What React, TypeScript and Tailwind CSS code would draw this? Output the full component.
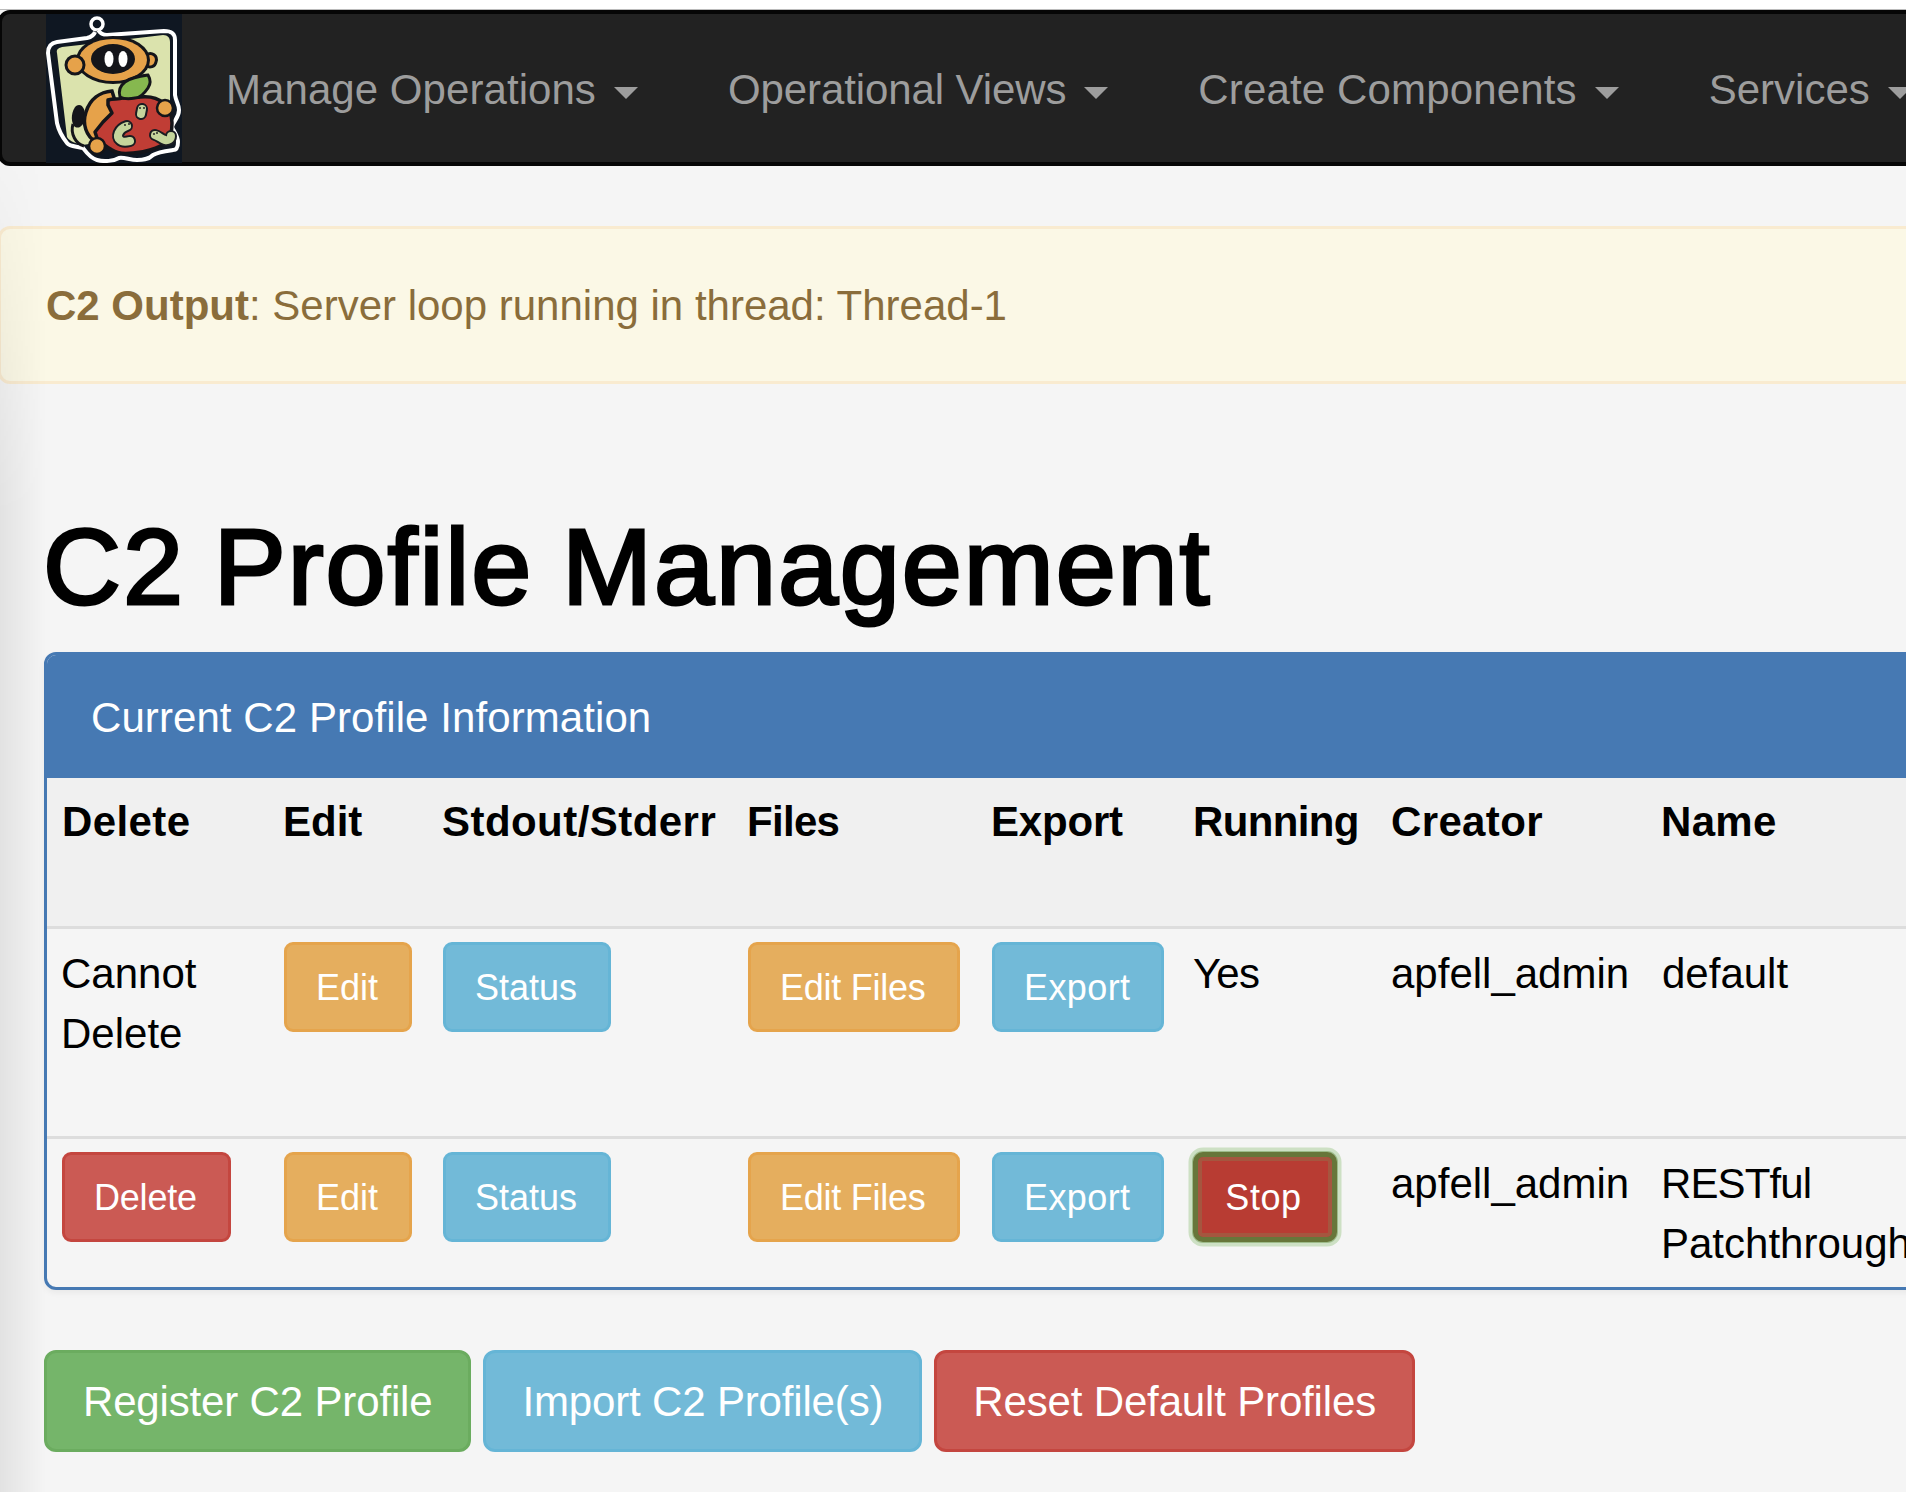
import React from "react";

const sans = "font-['Liberation_Sans',Arial,sans-serif]";

function Worm({ d }: { d: string }) {
  return (
    <g fill="none" strokeLinecap="round" strokeLinejoin="round">
      <path d={d} stroke="#1a1c22" strokeWidth="12" />
      <path d={d} stroke="#c5d59c" strokeWidth="8" />
    </g>
  );
}

function Logo() {
  return (
    <svg viewBox="0 0 136 149" preserveAspectRatio="none" className="w-[136px] h-[149px] shrink-0 -mr-[1px] bg-[#0f1722]">
      <circle cx="51" cy="10" r="6" fill="none" stroke="#fff" strokeWidth="3.5" />
      <path
        d="M52 16 C54 19 57 21 61 21 L118 17 C125 17 129 19 129 26 L129 81 C130 88 133 90 133 96 C133 104 128 106 126 113 C128 118 132 122 132 128 C132 134 130 136 127 136 C120 137 112 138 107 141 C102 146 96 146 91 146 C84 146 78 143 73 144 C68 147 58 148 51 146 C44 144 40 138 37 134 C30 132 24 133 21 129 C17 124 13 118 11 109 L2 39 C2 32 5 29 11 28 L41 24 C45 23 48 21 49 18"
        fill="#0f1722"
        stroke="#fff"
        strokeWidth="4"
        strokeLinejoin="round"
      />
      <path d="M11 39 C10 35 13 34 16 33 L34 31 L92 24 L117 21 C122 21 124 24 124 28 L124 89 L100 120 L37 131 C30 129 24 128 21 123 Z" fill="#dbe3ad" />
      <path d="M100 41 C106 37 112 42 110 48 C109 53 104 54 100 52 Z" fill="#e6a24a" stroke="#14151a" strokeWidth="3" />
      <ellipse cx="67" cy="46" rx="37" ry="24" fill="#14151a" />
      <ellipse cx="67" cy="46" rx="34" ry="21" fill="#e6a24a" />
      <ellipse cx="67" cy="45" rx="22" ry="15" fill="#14151a" />
      <ellipse cx="63" cy="45" rx="4.5" ry="8" fill="#fff" />
      <ellipse cx="77" cy="45" rx="4.5" ry="8" fill="#fff" />
      <circle cx="29" cy="51" r="9" fill="#e6a24a" stroke="#14151a" strokeWidth="3" />
      <path d="M30 92 C36 88 40 96 39 104 C38 112 32 116 28 112 C24 106 26 96 30 92 Z" fill="#14151a" />
      <path d="M27 110 C24 120 30 130 38 132" fill="none" stroke="#14151a" strokeWidth="3" />
      <path d="M66 77 C54 78 44 85 40 98 C36 110 40 122 50 128 L62 120 L70 90 Z" fill="#e6a24a" stroke="#14151a" strokeWidth="3.5" />
      <path d="M62 90 L66 99 L57 108 L50 118 L54 122 L62 110 L70 102 L66 90 Z" fill="#e8cfa8" />
      <path d="M62 86 C68 84 72 86 77 84 C84 82 90 84 94 83 C104 82 112 84 117 89 C123 94 126 102 126 109 C126 118 124 124 121 128 C116 132 110 134 104 136 C98 138 92 139 87 139 C78 140 70 139 66 136 C60 132 54 129 51 124 L49 118 L57 108 L66 99 L62 91 Z" fill="#c03d35" stroke="#14151a" strokeWidth="3.5" strokeLinejoin="round" />
      <path d="M74 83 C72 76 75 71 79 68 C86 63 94 62 102 61 C105 66 104 71 102 74 C98 80 94 84 89 84 C84 85 78 85 74 83 Z" fill="#86b84f" stroke="#14151a" strokeWidth="3" />
      <Worm d="M96 95 L95 100" />
      <Worm d="M81 112 C72 115 70 123 74 126 C76 128 80 128 84 127" />
      <Worm d="M109 121 C113 122 115 125 119 126 C122 127 125 125 125 122" />
      <circle cx="94" cy="94" r="0.9" fill="#14151a" />
      <circle cx="98" cy="94" r="0.9" fill="#14151a" />
      <circle cx="79" cy="111" r="0.9" fill="#14151a" />
      <circle cx="83" cy="110" r="0.9" fill="#14151a" />
      <circle cx="108" cy="120" r="0.9" fill="#14151a" />
      <circle cx="111" cy="119" r="0.9" fill="#14151a" />
      <circle cx="119" cy="94" r="8" fill="#e6a24a" stroke="#14151a" strokeWidth="2.5" />
      <circle cx="51" cy="132" r="8" fill="#e6a24a" stroke="#14151a" strokeWidth="2.5" />
    </svg>
  );
}

function NavItem({ label, track = "" }: { label: string; track?: string }) {
  return (
    <div className="flex items-center px-[45px] pt-[4px] h-full text-[42px] leading-[60px] text-[#9d9d9d] whitespace-nowrap shrink-0">
      <span className={track}>{label}</span>
      <span className="ml-[18px] mt-[6px] w-0 h-0 border-x-[12px] border-x-transparent border-t-[12px] border-t-[#9d9d9d]" />
    </div>
  );
}

const tones = {
  red: "bg-[#cb5a54] border-[#c4463f]",
  orange: "bg-[#e5ae5e] border-[#e5a44c]",
  blue: "bg-[#72bad8] border-[#65b5d6]",
  green: "bg-[#75b56a] border-[#6bac5f]",
};

function Btn({ tone, children, extra = "" }: { tone: keyof typeof tones; children: React.ReactNode; extra?: string }) {
  return (
    <span className={`block w-fit border-[3px] rounded-[9px] pl-[29px] pr-[31px] pt-[16px] pb-[14px] text-[36px] leading-[54px] text-white whitespace-nowrap ${tones[tone]} ${extra}`}>
      {children}
    </span>
  );
}

function BigBtn({ tone, children }: { tone: keyof typeof tones; children: React.ReactNode }) {
  return (
    <span className={`inline-block border-[3px] rounded-[12px] px-[36px] pt-[19px] pb-[17px] text-[42px] leading-[60px] tracking-[-0.16px] text-white whitespace-nowrap ${tones[tone]}`}>
      {children}
    </span>
  );
}

const td = "px-[15px] pt-[15px] pb-[8px] align-top border-t-[3px] border-[#dddddd]";
const tdBtn = "px-[15px] pt-[13px] pb-[8px] align-top border-t-[3px] border-[#dddddd]";
const th = "px-[15px] pt-[14px] align-top text-left font-bold";

const heads = [
  { label: "Delete", cls: "tracking-[0.4px]" },
  { label: "Edit", cls: "" },
  { label: "Stdout/Stderr", cls: "tracking-[0.45px]" },
  { label: "Files", cls: "tracking-[-0.7px] !pl-[14px]" },
  { label: "Export", cls: "tracking-[-0.2px] !pl-[14px]" },
  { label: "Running", cls: "tracking-[-0.65px] !pl-[14px]" },
  { label: "Creator", cls: "tracking-[0.35px]" },
  { label: "Name", cls: "tracking-[0.3px] !pl-[14px]" },
];

function Buttons() {
  return (
    <>
      <td className={tdBtn}><Btn tone="orange" extra="ml-[1px]">Edit</Btn></td>
      <td className={tdBtn}><Btn tone="blue" extra="ml-[1px]">Status</Btn></td>
      <td className={tdBtn}><Btn tone="orange" extra="tracking-[-0.25px]">Edit Files</Btn></td>
      <td className={tdBtn}><Btn tone="blue" extra="tracking-[0.4px]">Export</Btn></td>
    </>
  );
}

export default function App() {
  return (
    <div className={`relative w-[1906px] h-[1492px] overflow-hidden bg-[#f5f5f5] text-black text-[42px] leading-[60px] ${sans}`}>
      <div className="h-[10px] bg-white border-b border-[#bbbbbb]" />
      <nav className="-ml-[2px] w-[2400px] h-[156px] flex items-stretch bg-[#222222] border-[4px] border-[#060606] rounded-[12px] pl-[44px]">
        <Logo />
        <NavItem label="Manage Operations" track="tracking-[0.06px]" />
        <NavItem label="Operational Views" track="tracking-[-0.1px]" />
        <NavItem label="Create Components" track="tracking-[0.15px]" />
        <NavItem label="Services" />
      </nav>
      <div className="-ml-[2px] w-[2400px] mt-[60px] h-[158px] border-[3px] border-[#f9ebd0] rounded-[12px] bg-[#fbf8e6] text-[#8a6d3b] px-[45px] pt-[47px]">
        <b>C2 Output</b>: Server loop running in thread: Thread-1
      </div>
      <h1 className="ml-[43px] mt-[123px] text-[108px] leading-[119px] font-normal tracking-[1.9px] [word-spacing:-3px] [-webkit-text-stroke:3px_black] whitespace-nowrap">C2 Profile Management</h1>
      <section className="ml-[44px] mt-[26px] w-[2400px] border-[3px] border-[#4679b3] rounded-[12px] shadow-[0_3px_6px_rgba(0,0,0,0.05)]">
        <div className="h-[123px] bg-[#4679b3] text-white pl-[44px] pt-[33px] tracking-[0.08px] rounded-t-[9px]">Current C2 Profile Information</div>
        <table className="table-fixed border-collapse w-[2000px] text-black">
          <colgroup>
            <col className="w-[221px]" />
            <col className="w-[159px]" />
            <col className="w-[306px]" />
            <col className="w-[244px]" />
            <col className="w-[202px]" />
            <col className="w-[197px]" />
            <col className="w-[271px]" />
            <col className="w-[400px]" />
          </colgroup>
          <thead className="bg-[#f0f0f0]">
            <tr className="h-[149px]">
              {heads.map((h) => (
                <th key={h.label} className={`${th} ${h.cls}`}>{h.label}</th>
              ))}
            </tr>
          </thead>
          <tbody>
            <tr className="h-[210px]">
              <td className={`${td} !pl-[14px]`}>Cannot Delete</td>
              <Buttons />
              <td className={`${td} !pl-[14px] tracking-[-0.8px]`}>Yes</td>
              <td className={td}>apfell_admin</td>
              <td className={td}>default</td>
            </tr>
            <tr className="h-[150px]">
              <td className={tdBtn}><Btn tone="red" extra="tracking-[-0.2px]">Delete</Btn></td>
              <Buttons />
              <td className={tdBtn}>
                <span className="flex items-center justify-center -ml-[1px] w-[144px] h-[90px] border-[5px] border-[#67763a] rounded-[10px] bg-[#b83c33] pr-[3px] pt-[2px] text-[36px] leading-[54px] tracking-[0.6px] text-white shadow-[0_0_0_1px_#9dbb8a,0_0_0_4.5px_#cde0c4,inset_0_0_0_4px_#a5563f]">Stop</span>
              </td>
              <td className={td}>apfell_admin</td>
              <td className={`${td} !pb-0 !pl-[14px]`}><span className="tracking-[-0.9px]">RESTful</span><br />Patchthrough</td>
            </tr>
          </tbody>
        </table>
      </section>
      <div className="ml-[44px] mt-[60px] flex gap-[12px]">
        <BigBtn tone="green">Register C2 Profile</BigBtn>
        <BigBtn tone="blue">Import C2 Profile(s)</BigBtn>
        <BigBtn tone="red">Reset Default Profiles</BigBtn>
      </div>
      <div className="absolute left-0 top-[166px] bottom-0 w-[46px] pointer-events-none bg-[linear-gradient(90deg,rgba(0,0,0,0.075),rgba(0,0,0,0))] [mask-image:linear-gradient(180deg,rgba(0,0,0,0.1),black_350px)]" />
    </div>
  );
}
